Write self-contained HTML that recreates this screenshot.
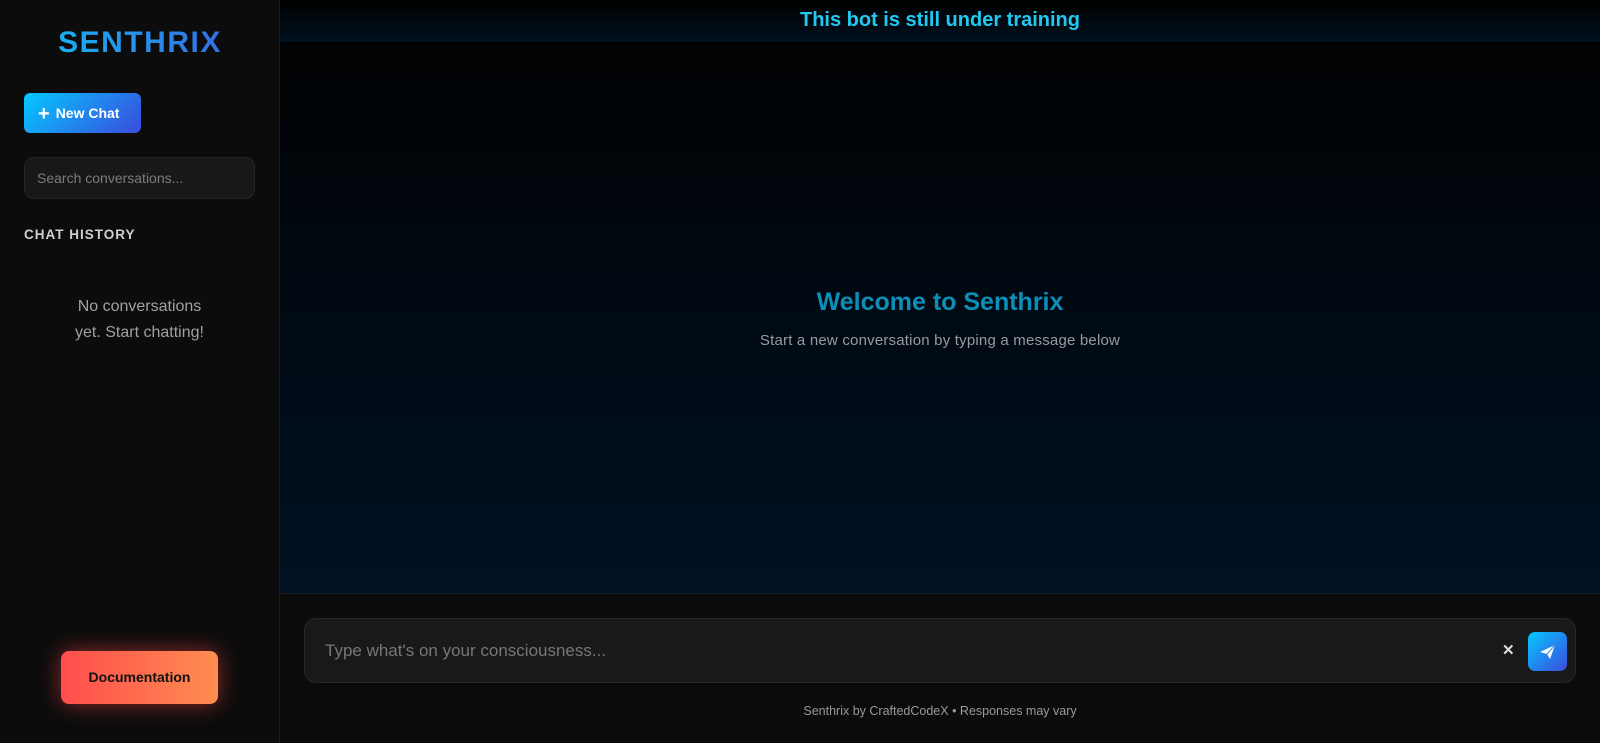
<!DOCTYPE html>
<html><head><style>
*{box-sizing:border-box;margin:0;padding:0}
body{width:1600px;height:743px;background:#0b0b0b;font-family:"Liberation Sans",sans-serif;overflow:hidden;position:relative}
.side{position:absolute;left:0;top:0;width:280px;height:743px;background:#0c0c0c;border-right:1px solid #1c1c1c}
.logo{position:absolute;top:26px;width:280px;text-align:center;font-weight:bold;font-size:30px;letter-spacing:1.5px;background:linear-gradient(90deg,#12c4f7,#3b5be0);-webkit-background-clip:text;color:transparent}
.nc{position:absolute;left:24px;top:93px;width:117px;height:40px;border-radius:6px;background:linear-gradient(135deg,#05c8ff,#3a4bdc);color:#fff;font-weight:bold;font-size:14px;line-height:40px;padding-left:14px}
.nc b{font-size:20px;vertical-align:-2px;margin-right:6px}
.search{position:absolute;left:24px;top:157px;width:231px;height:42px;border-radius:10px;background:#181818;border:1px solid #262626;color:#7c7c7c;font-size:14px;line-height:40px;padding-left:12px}
.hist{position:absolute;left:24px;top:227px;color:#d0d0d0;font-weight:bold;font-size:13.5px;letter-spacing:1px}
.empty{position:absolute;left:62px;top:294px;width:155px;text-align:center;color:#a0a0a0;font-size:16px;line-height:26px}
.doc{position:absolute;left:61px;top:651px;width:157px;height:53px;border-radius:8px;background:linear-gradient(90deg,#ff4d4d,#ff8d50);box-shadow:0 0 22px rgba(255,70,70,.55);color:#111;font-weight:bold;font-size:14px;text-align:center;line-height:53px}
.main{position:absolute;left:280px;top:0;right:0;height:594px;background:linear-gradient(180deg,#000 0%,#001224 100%);border-bottom:1px solid #161a1e}
.banner{height:42px;background:linear-gradient(180deg,#000,#00111f);text-align:center;color:#22c8f0;font-weight:bold;font-size:20px;line-height:40px}
.wt{position:absolute;top:288px;width:100%;text-align:center;color:#0b8fb8;font-weight:bold;font-size:25px}
.ws{position:absolute;top:332px;width:100%;text-align:center;color:#9a9a9a;font-size:15px;letter-spacing:.2px}
.inp{position:absolute;left:304px;top:618px;width:1272px;height:65px;border-radius:12px;background:#18191b;border:1px solid #27282a;color:#777;font-size:17px;line-height:63px;padding-left:20px}
.x{position:absolute;left:1502px;top:641px;color:#ddd;font-size:15px;font-weight:bold}
.send{position:absolute;left:1528px;top:632px;width:39px;height:39px;border-radius:7px;background:linear-gradient(135deg,#05c8ff,#3a4bdc)}
.foot{position:absolute;left:280px;right:0;top:704px;text-align:center;color:#9a9a9a;font-size:12.5px}
</style></head><body>
<div class="side">
<div class="logo">SENTHRIX</div>
<div class="nc"><b>+</b>New Chat</div>
<div class="search">Search conversations...</div>
<div class="hist">CHAT HISTORY</div>
<div class="empty">No conversations<br>yet. Start chatting!</div>
<div class="doc">Documentation</div>
</div>
<div class="main">
<div class="banner">This bot is still under training</div>
<div class="wt">Welcome to Senthrix</div>
<div class="ws">Start a new conversation by typing a message below</div>
</div>
<div class="inp">Type what's on your consciousness...</div>
<div class="x">✕</div>
<div class="send"><svg width="39" height="39" viewBox="0 0 39 39"><path d="M12 20 L27 13 L22 27 L19 22 Z" fill="#fff"/><path d="M19 22 L27 13" stroke="#3a8ae0" stroke-width="1"/></svg></div>
<div class="foot">Senthrix by CraftedCodeX • Responses may vary</div>
</body></html>
